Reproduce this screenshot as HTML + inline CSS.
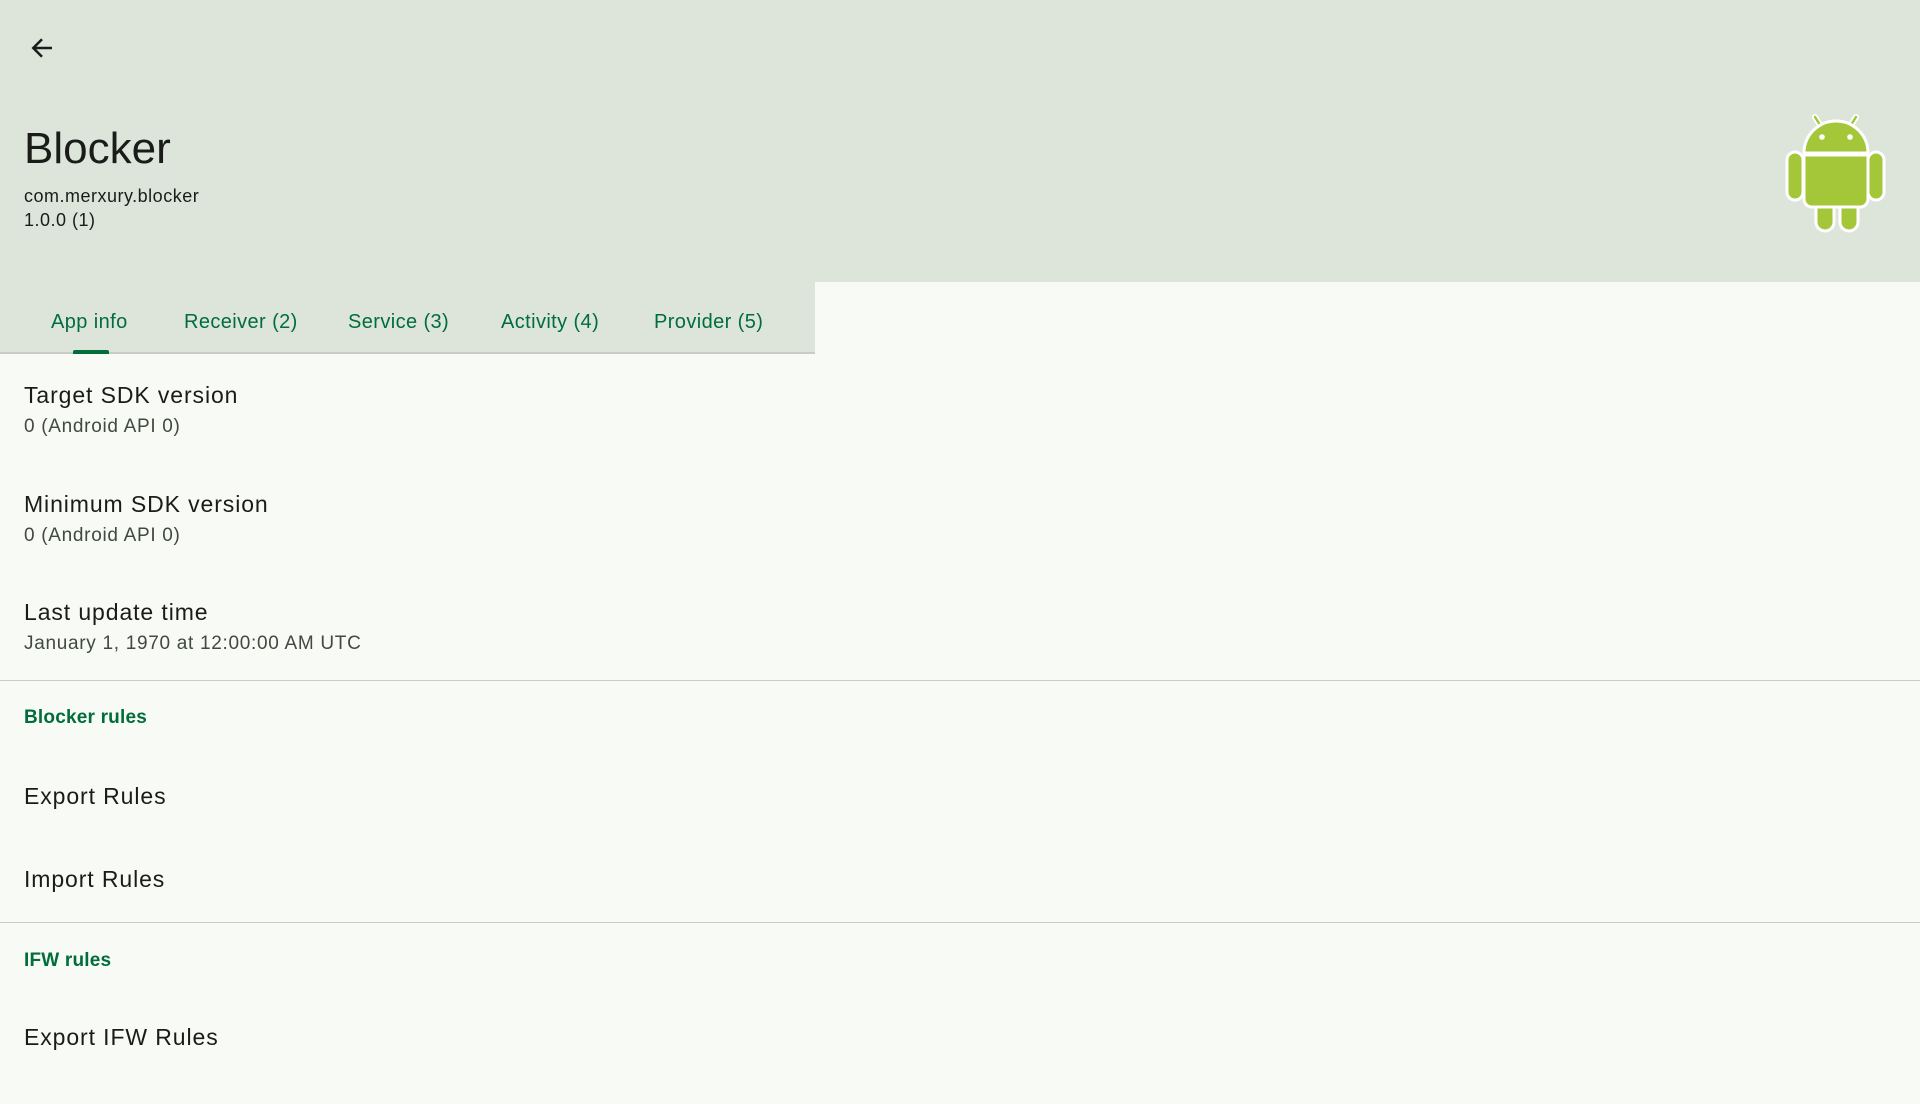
<!DOCTYPE html>
<html><head><meta charset="utf-8"><style>
*{margin:0;padding:0;box-sizing:border-box}
body{width:1920px;height:1104px;background:#f8faf6;font-family:"Liberation Sans",sans-serif;position:relative;overflow:hidden;color:#1a1c1a}
.hdr{position:absolute;left:0;top:0;width:1920px;height:282px;background:#dde5da}
.tabbg{position:absolute;left:0;top:282px;width:815px;height:72px;background:#dde5da;border-bottom:2px solid #c6cdc4}
.t{position:absolute;white-space:nowrap;line-height:1}
.tab{position:absolute;top:311px;font-size:20px;color:#006d3b;letter-spacing:0.4px;white-space:nowrap}
.title{font-size:23px;letter-spacing:0.9px;color:#1a1c1a}
.sub{font-size:19px;letter-spacing:0.7px;color:#424940}
.grn{font-size:19px;font-weight:bold;color:#006d3b;letter-spacing:0.2px}
.div{position:absolute;left:0;width:1920px;height:1px;background:#c6cdc4}
</style></head><body>
<div class="hdr"></div>
<div class="tabbg"></div>
<svg style="position:absolute;left:27px;top:33px" width="30" height="30" viewBox="0 0 24 24"><path d="M20 12H5M12 5l-7 7 7 7" fill="none" stroke="#1a1c1a" stroke-width="2"/></svg>
<div class="t" style="left:24px;top:127px;font-size:44px;color:#1a1c1a">Blocker</div>
<div class="t" style="left:24px;top:187px;font-size:18px;letter-spacing:0.5px;color:#1a1c1a">com.merxury.blocker</div>
<div class="t" style="left:24px;top:211px;font-size:18px;letter-spacing:0.5px;color:#1a1c1a">1.0.0 (1)</div>
<div class="tab" style="left:51px">App info</div>
<div class="tab" style="left:184px">Receiver (2)</div>
<div class="tab" style="left:348px">Service (3)</div>
<div class="tab" style="left:501px">Activity (4)</div>
<div class="tab" style="left:654px">Provider (5)</div>
<div style="position:absolute;left:73px;top:350px;width:36px;height:4px;background:#006d3b;border-radius:2px 2px 0 0"></div>
<svg style="position:absolute;left:1780px;top:110px" width="112" height="125" viewBox="1780 110 112 125">
<g fill="#a4c639" stroke="#fff" stroke-width="3">
<line x1="1815" y1="117" x2="1822" y2="128" stroke="#fff" stroke-width="6" stroke-linecap="round"/>
<line x1="1856" y1="117" x2="1849" y2="128" stroke="#fff" stroke-width="6" stroke-linecap="round"/>
<line x1="1815" y1="117" x2="1822" y2="128" stroke="#a4c639" stroke-width="2.5" stroke-linecap="round"/>
<line x1="1856" y1="117" x2="1849" y2="128" stroke="#a4c639" stroke-width="2.5" stroke-linecap="round"/>
<path d="M1804 153a32 32 0 0 1 64 0z"/>
<rect x="1787" y="152" width="16" height="48" rx="8"/>
<rect x="1868" y="152" width="16" height="48" rx="8"/>
<rect x="1816" y="190" width="18" height="41" rx="9"/>
<rect x="1840" y="190" width="18" height="41" rx="9"/>
<path d="M1804 155h64v44a8 8 0 0 1-8 8h-48a8 8 0 0 1-8-8z"/>
</g>
<circle cx="1822" cy="137" r="2.8" fill="#fff"/><circle cx="1850" cy="137" r="2.8" fill="#fff"/>
</svg>
<div class="t title" style="left:24px;top:384px">Target SDK version</div>
<div class="t sub" style="left:24px;top:417px">0 (Android API 0)</div>
<div class="t title" style="left:24px;top:493px">Minimum SDK version</div>
<div class="t sub" style="left:24px;top:526px">0 (Android API 0)</div>
<div class="t title" style="left:24px;top:601px">Last update time</div>
<div class="t sub" style="left:24px;top:634px">January 1, 1970 at 12:00:00 AM UTC</div>
<div class="div" style="top:680px"></div>
<div class="t grn" style="left:24px;top:708px">Blocker rules</div>
<div class="t title" style="left:24px;top:785px">Export Rules</div>
<div class="t title" style="left:24px;top:868px">Import Rules</div>
<div class="div" style="top:922px"></div>
<div class="t grn" style="left:24px;top:951px">IFW rules</div>
<div class="t title" style="left:24px;top:1026px">Export IFW Rules</div>
</body></html>
